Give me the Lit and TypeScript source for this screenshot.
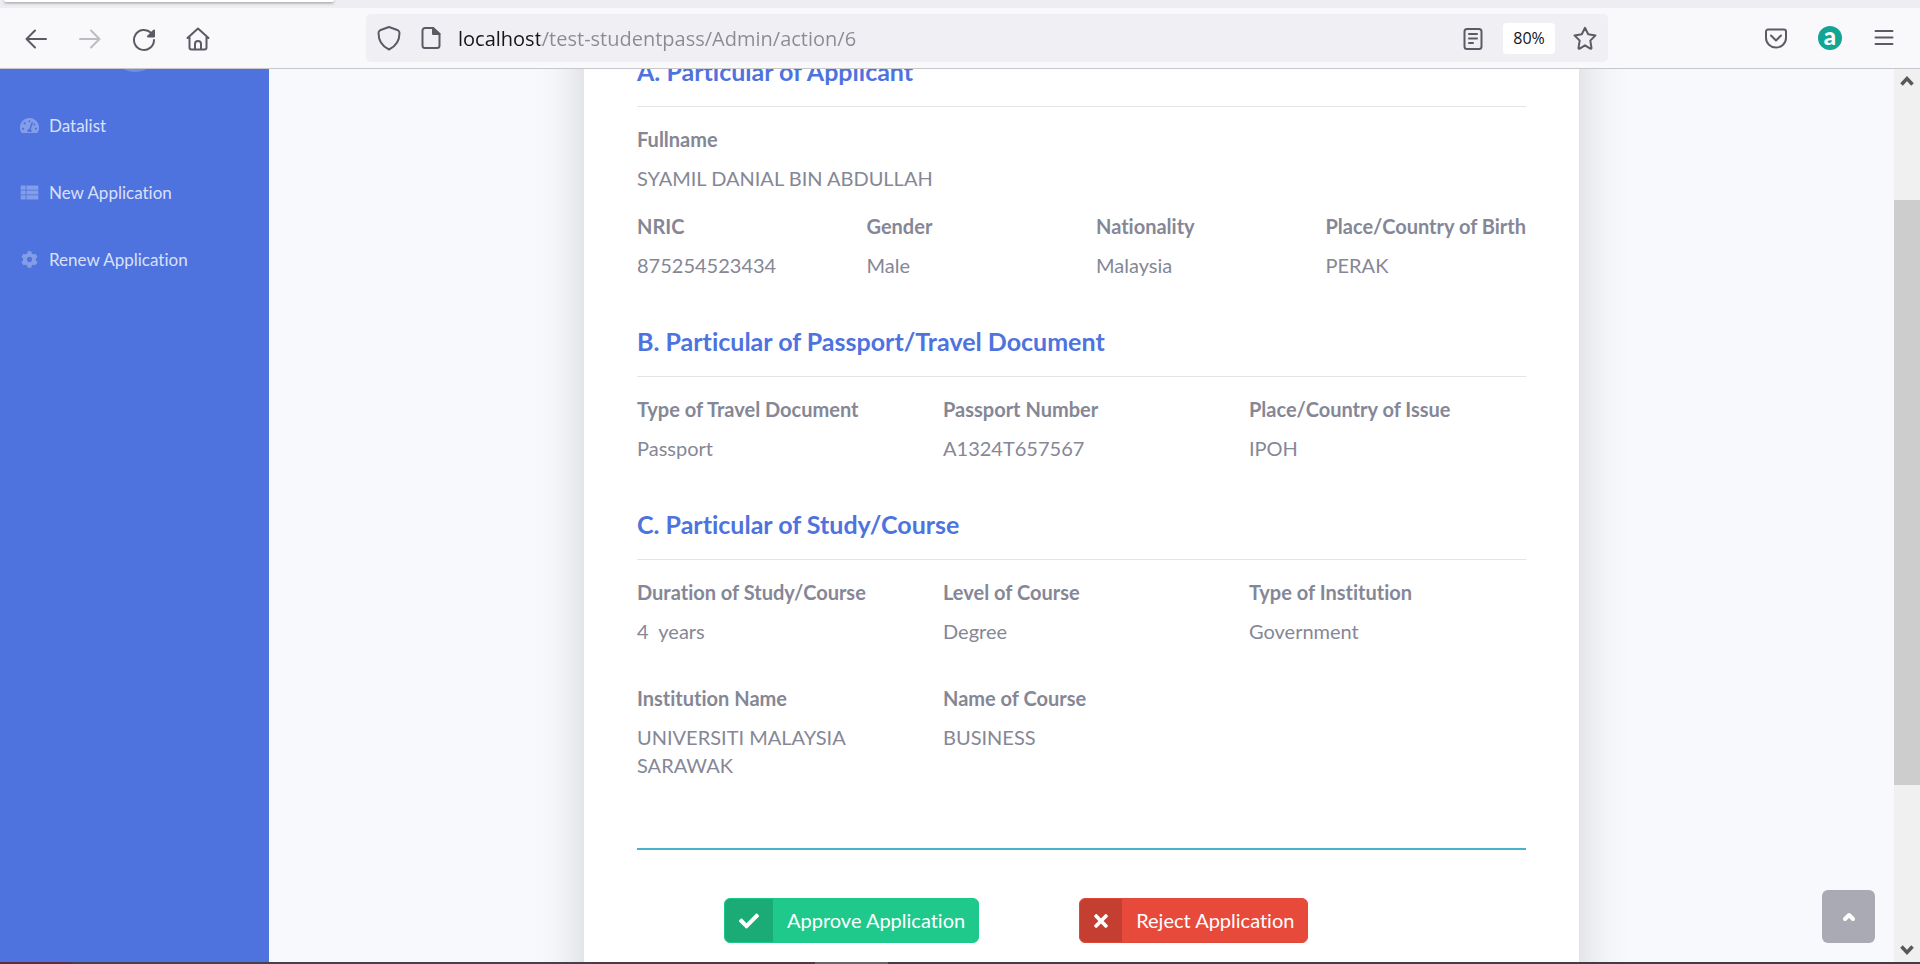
import { LitElement, html, css, svg, TemplateResult } from "lit";
import { customElement, property } from "lit/decorators.js";

interface Field {
  label: string;
  value: string;
}

interface Section {
  title: string;
  rows: { columns: number; fields: Field[]; spaced?: boolean }[];
}

const icon = (name: string, size: number, box: string, body: TemplateResult | unknown) =>
  html`<svg class="icon ${name}" width=${size} height=${size} viewBox=${box} aria-hidden="true">${body}</svg>`;

const line = (name: string, body: unknown) => icon("line " + name, 26, "0 0 26 26", body);

const sections: Section[] = [
  {
    title: "A. Particular of Applicant",
    rows: [
      { columns: 1, fields: [{ label: "Fullname", value: "SYAMIL DANIAL BIN ABDULLAH" }] },
      {
        columns: 4,
        fields: [
          { label: "NRIC", value: "875254523434" },
          { label: "Gender", value: "Male" },
          { label: "Nationality", value: "Malaysia" },
          { label: "Place/Country of Birth", value: "PERAK" },
        ],
      },
    ],
  },
  {
    title: "B. Particular of Passport/Travel Document",
    rows: [
      {
        columns: 3,
        fields: [
          { label: "Type of Travel Document", value: "Passport" },
          { label: "Passport Number", value: "A1324T657567" },
          { label: "Place/Country of Issue", value: "IPOH" },
        ],
      },
    ],
  },
  {
    title: "C. Particular of Study/Course",
    rows: [
      {
        columns: 3,
        fields: [
          { label: "Duration of Study/Course", value: "4\u00a0 years" },
          { label: "Level of Course", value: "Degree" },
          { label: "Type of Institution", value: "Government" },
        ],
      },
      {
        columns: 3,
        spaced: true,
        fields: [
          { label: "Institution Name", value: "UNIVERSITI MALAYSIA SARAWAK" },
          { label: "Name of Course", value: "BUSINESS" },
        ],
      },
    ],
  },
];

@customElement("browser-bar")
export class BrowserBar extends LitElement {
  static styles = css`
    :host { display: block; }
    .tabs { height: 8px; padding: 0 4px; overflow: hidden; background: #eeedf2; }
    .tab { width: 330px; height: 2px; background: #fff; border-radius: 0 0 5px 5px; box-shadow: 0 1px 3px rgba(0, 0, 0, 0.45); }
    .bar { display: flex; align-items: center; gap: 141px; height: 60px; padding: 0 9px; background: #f9f9fb; border-bottom: 1px solid #c8c8cc; }
    .group { display: flex; }
    button { display: grid; place-items: center; width: 54px; height: 48px; padding: 0; border: 0; background: none; color: #5b5b66; font: inherit; }
    button:disabled { color: #bcbcc2; }
    .line { fill: none; stroke: currentColor; stroke-width: 2; stroke-linecap: round; stroke-linejoin: round; }
    .solid { fill: currentColor; }
    .address { display: flex; flex: 1; align-items: center; min-width: 0; height: 48px; padding: 0 2px; border-radius: 5px; background: #f0f0f4; }
    .address button { width: 42px; }
    .address input {
      flex: 1; min-width: 0; height: 40px; padding: 0 6px; border: 0; outline: 0;
      font: 20px "Open Sans", sans-serif;
      color: transparent;
      background: linear-gradient(to right, #15141a 88px, #8b8a92 88px);
      -webkit-background-clip: text; background-clip: text;
    }
    .address .zoom { width: 52px; height: 31px; margin: 0 9px; border-radius: 4px; background: #fff; color: #15141a; font: 16px "Open Sans", sans-serif; }
    .badge { display: grid; place-items: center; width: 24px; height: 24px; border-radius: 50%; background: #12a594; color: #fff; font: 900 24px/18px Lato, sans-serif; padding-bottom: 4px; box-sizing: border-box; }
  `;

  render() {
    return html`
      <div class="tabs"><div class="tab"></div></div>
      <div class="bar">
        <nav class="group" aria-label="History">
          <button aria-label="Back">${line("", svg`<path d="M23 14H3.5M12 5.5 3.5 14l8.500 8.500"/>`)}</button>
          <button aria-label="Forward" disabled>${line("", svg`<path d="M3 14h19.500M14 5.500l8.500 8.500-8.500 8.500"/>`)}</button>
          <button aria-label="Reload">${line("", svg`<path d="M23 15A10 10 0 1 1 20 7.800"/><path class="solid" d="M23 5.500v6h-6z"/>`)}</button>
          <button aria-label="Home">${line("", svg`<path d="M2.500 13 13 3.500 23.500 13M4.500 12v10.500a2 2 0 0 0 2 2h13a2 2 0 0 0 2-2V12M10 24v-5a3 3 0 0 1 6 0v5"/>`)}</button>
        </nav>
        <div class="address">
          <button aria-label="Protections">${line("", svg`<path d="M13 2 22 5.300Q23.500 6 23.500 8C23.500 15.500 19.500 21.500 13 24.500 6.500 21.500 2.500 15.500 2.500 8Q2.500 6 4 5.300Z"/>`)}</button>
          <button aria-label="Site information">${line("", svg`<path d="M15 3H7a2.500 2.500 0 0 0-2.500 2.500v15A2.500 2.500 0 0 0 7 23h12a2.500 2.500 0 0 0 2.500-2.500V9z"/><path class="solid" d="M15 3v6h6.500z"/>`)}</button>
          <input aria-label="Address" spellcheck="false" value="localhost/test-studentpass/Admin/action/6" />
          <button aria-label="Reader view">${line("", svg`<rect x="4.500" y="4" width="17" height="20" rx="2.500"/><path d="M9 9h8M9 13.500h8M9 18h4"/>`)}</button>
          <button class="zoom">80%</button>
          <button aria-label="Bookmark">${line("", svg`<path d="M13 2.800l3.200 6.500 7.300 1.100-5.200 5.200 1.200 7.300a.8.8 0 0 1-1.200.8L13 20.300l-5.300 3.400a.8.8 0 0 1-1.200-.8l1.200-7.300-5.200-5.200 7.300-1.100z"/>`)}</button>
        </div>
        <div class="group">
          <button aria-label="Save to Pocket">${line("", svg`<path d="M5 4.500h16a2 2 0 0 1 2 2v6.500a10 9.500 0 0 1-20 0V6.500a2 2 0 0 1 2-2zM8 10.500l5 5 5-5"/>`)}</button>
          <button aria-label="Extension"><span class="badge">a</span></button>
          <button aria-label="Menu">${line("", svg`<path d="M4.500 6h17M4.500 12.500h17M4.500 19h17"/>`)}</button>
        </div>
      </div>
    `;
  }
}

@customElement("side-menu")
export class SideMenu extends LitElement {
  static styles = css`
    :host { display: block; background: #4e73df; overflow: hidden; }
    .toggle { display: block; width: 48px; height: 48px; margin: -45px auto 20px; border: 0; border-radius: 50%; background: rgba(255, 255, 255, 0.2); }
    ul { margin: 0; padding: 0; list-style: none; }
    a { display: flex; align-items: center; gap: 9px; padding: 19px; color: rgba(255, 255, 255, 0.8); font: 17px/29px Lato, sans-serif; font-variant-ligatures: none; text-decoration: none; }
    .icon { width: 21px; height: 17px; fill: rgba(255, 255, 255, 0.3); }
  `;

  render() {
    return html`
      <button class="toggle" aria-label="Toggle menu"></button>
      <ul>
        <li><a href="#datalist">${icon("", 17, "0 0 576 512", svg`<path d="M288 32C129 32 0 161 0 320c0 53 14 102 39 145 6 9 16 15 27 15h444c11 0 21-6 27-15 25-43 39-92 39-145C576 161 447 32 288 32zm0 64c15 0 27 10 31 23-1 2-2 3-2 5l-10 28c-5 5-12 8-19 8-18 0-32-14-32-32s14-32 32-32zM96 384c-18 0-32-14-32-32s14-32 32-32 32 14 32 32-14 32-32 32zm48-160c-18 0-32-14-32-32s14-32 32-32 32 14 32 32-14 32-32 32zm247-40-61 184c14 12 22 29 22 48 0 12-3 23-9 32H233c-6-9-9-20-9-32 0-34 27-62 61-64l61-184c4-12 18-19 30-15 13 5 19 18 15 31zm15 56 15-47c3-1 7-1 11-1 18 0 32 14 32 32s-14 32-32 32c-11 0-20-6-26-16zm74 144c-18 0-32-14-32-32s14-32 32-32 32 14 32 32-14 32-32 32z"/>`)}Datalist</a></li>
        <li><a href="#new">${icon("", 17, "0 0 512 512", svg`<path d="M-10 46h150v124h-150zM165 46h357v124h-357zM-10 194h150v124h-150zM165 194h357v124h-357zM-10 342h150v124h-150zM165 342h357v124h-357z"/>`)}New Application</a></li>
        <li><a href="#renew">${icon("", 17, "0 0 512 512", svg`<path d="M487 316l-42-25c4-23 4-47 0-70l42-25c5-3 8-9 6-14-11-36-30-68-55-95-4-4-10-5-15-2l-43 24c-18-15-39-27-61-35V25c0-6-4-11-9-12-36-8-74-8-110 0-5 1-9 6-9 12v49c-22 8-43 20-61 35L87 85c-5-3-11-2-15 2-25 27-44 59-55 95-2 5 0 11 5 14l43 25c-4 23-4 47 0 70l-43 25c-5 3-7 9-5 14 11 36 30 68 55 95 4 4 10 5 15 2l43-24c18 15 39 27 61 35v49c0 6 4 11 9 12 36 8 74 8 110 0 5-1 9-6 9-12v-49c22-8 43-20 61-35l43 24c5 3 11 2 15-2 25-27 44-59 55-95 1-5-1-11-6-14zM256 336c-44 0-80-36-80-80s36-80 80-80 80 36 80 80-36 80-80 80z"/>`)}Renew Application</a></li>
      </ul>
    `;
  }
}

@customElement("application-card")
export class ApplicationCard extends LitElement {
  @property({ attribute: false }) sections: Section[] = [];

  static styles = css`
    :host { display: block; box-sizing: border-box; padding: 153px 53px 53px; background: #fff; box-shadow: 0 19px 48px rgba(0, 0, 0, 0.16); color: #858796; font: 20px/28px Lato, sans-serif; font-variant-ligatures: none; }
    section { margin-bottom: 47px; }
    section:last-of-type { margin-bottom: 69px; }
    h2 { margin: 0 0 18px; padding-bottom: 20px; border-bottom: 1px solid #e4e4e7; color: #4e73df; font-size: 25px; line-height: 30px; font-weight: 700; }
    dl { display: grid; gap: 29px; margin: 0; }
    dl + dl { margin-top: 20px; }
    dl + .spaced { margin-top: 39px; }
    .cols-3 { grid-template-columns: repeat(3, minmax(0, 1fr)); }
    .cols-4 { grid-template-columns: repeat(4, minmax(0, 1fr)); }
    dt { margin-bottom: 11px; font-weight: 700; white-space: nowrap; }
    dd { margin: 0; }
    .actions { display: flex; gap: 100px; padding: 48px 0 0 87px; border-top: 2px solid #45b4c6; }
    .action { display: flex; box-sizing: border-box; height: 45px; padding: 0; overflow: hidden; border: 1px solid; border-radius: 6px; color: #fff; font-family: inherit; font-size: 20px; line-height: 43px; font-variant-ligatures: none; }
    .approve { border-color: #1cc88a; background: #1fc98c; }
    .reject { border-color: #e04839; background: #e74a3b; }
    .mark { display: grid; place-items: center; padding: 0 14px; background: rgba(0, 0, 0, 0.15); }
    .text { padding: 0 13px 0 14px; }
    .icon { display: block; fill: #fff; }
    .cross { width: 14px; }
  `;

  render() {
    return html`
      ${this.sections.map(
        (s) => html`<section>
          <h2>${s.title}</h2>
          ${s.rows.map(
            (r) => html`<dl class="cols-${r.columns} ${r.spaced ? "spaced" : ""}">
              ${r.fields.map((f) => html`<div><dt>${f.label}</dt><dd>${f.value}</dd></div>`)}
            </dl>`
          )}
        </section>`
      )}
      <div class="actions">
        <button class="action approve">
          <span class="mark">${icon("", 20, "0 0 512 512", svg`<path d="M173.900 439.400l-166.400-166.400c-10-10-10-26.200 0-36.200l36.200-36.200c10-10 26.200-10 36.200 0L192 312.700 432.100 72.600c10-10 26.200-10 36.200 0l36.200 36.200c10 10 10 26.200 0 36.200l-294.400 294.400c-10 10-26.200 10-36.200 0z"/>`)}</span>
          <span class="text">Approve Application</span>
        </button>
        <button class="action reject">
          <span class="mark">${icon("cross", 20, "0 0 352 512", svg`<path d="M242.700 256l100.100-100.100c12.300-12.300 12.300-32.200 0-44.500l-22.200-22.200c-12.300-12.300-32.200-12.300-44.500 0L176 189.300 75.900 89.200c-12.300-12.300-32.200-12.300-44.500 0L9.200 111.400c-12.300 12.300-12.300 32.200 0 44.500L109.300 256 9.200 356.100c-12.300 12.300-12.300 32.200 0 44.500l22.200 22.200c12.300 12.300 32.200 12.300 44.500 0L176 322.700l100.100 100.100c12.300 12.300 32.200 12.300 44.500 0l22.200-22.200c12.300-12.300 12.300-32.200 0-44.500L242.700 256z"/>`)}</span>
          <span class="text">Reject Application</span>
        </button>
      </div>
    `;
  }
}

@customElement("app-root")
export class AppRoot extends LitElement {
  static styles = css`
    :host { display: grid; grid-template-rows: auto minmax(0, 1fr) 2px; height: 100vh; overflow: hidden; }
    .page { display: grid; grid-template-columns: 269px minmax(0, 1fr) 26px; min-height: 0; }
    main { position: relative; overflow: hidden; background: #f8f9fc; padding: 0 29px; }
    .sheet { max-width: 995px; margin: -166px auto 0; }
    .top { position: absolute; right: 19px; bottom: 19px; display: grid; place-items: center; width: 53px; height: 53px; border-radius: 6px; background: #a9aab4; }
    .top .icon { fill: none; stroke: #fff; stroke-width: 4; stroke-linecap: round; stroke-linejoin: round; }
    .scroll { display: flex; flex-direction: column; background: #f0f0f0; }
    .arrow { display: grid; place-items: center; height: 24px; padding: 0; border: 0; background: none; }
    .arrow .icon { fill: none; stroke: #58585a; stroke-width: 3.500; }
    .before { flex: 107; }
    .thumb { flex: 585; background: #cdcdcd; }
    .after { flex: 153; }
    .edge { background: linear-gradient(to right, #5a2f3c 72px, #46404a 72px, #46404a 588px, #4f3a44 588px, #4f3a44 815px, #6b666c 815px, #6b666c 888px, #443c44 888px); }
  `;

  render() {
    return html`
      <browser-bar></browser-bar>
      <div class="page">
        <side-menu></side-menu>
        <main>
          <application-card class="sheet" .sections=${sections}></application-card>
          <a class="top" href="#top" aria-label="Back to top">${icon("", 16, "0 0 16 16", svg`<path d="M4 10l4-4 4 4"/>`)}</a>
        </main>
        <div class="scroll">
          <button class="arrow" aria-label="Scroll up">${icon("", 14, "0 0 14 14", svg`<path d="M1.500 10.500 7 4.500l5.500 6"/>`)}</button>
          <div class="before"></div>
          <div class="thumb"></div>
          <div class="after"></div>
          <button class="arrow" aria-label="Scroll down">${icon("", 14, "0 0 14 14", svg`<path d="M1.500 3.500 7 9.500l5.500-6"/>`)}</button>
        </div>
      </div>
      <div class="edge"></div>
    `;
  }
}
